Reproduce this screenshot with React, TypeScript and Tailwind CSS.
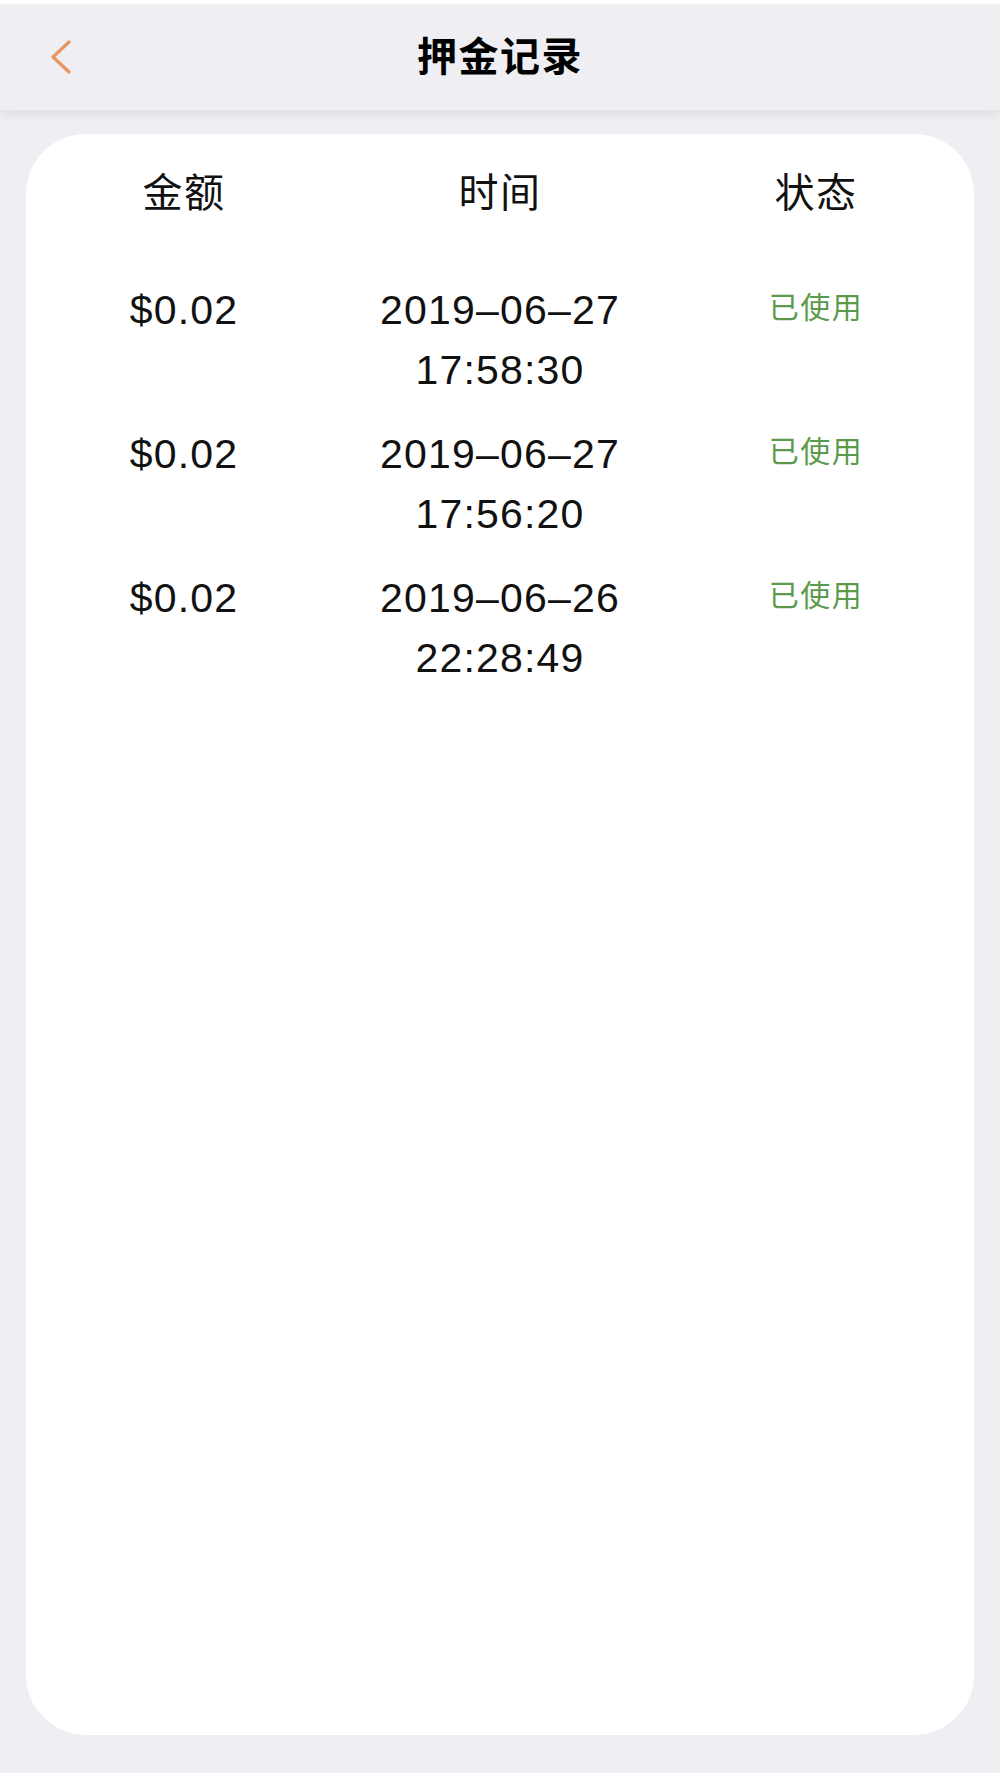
import React from "react";

const rows = [
  { amount: "$0.02", date: "2019–06–27", time: "17:58:30", status: "已使用" },
  { amount: "$0.02", date: "2019–06–27", time: "17:56:20", status: "已使用" },
  { amount: "$0.02", date: "2019–06–26", time: "22:28:49", status: "已使用" },
];

export default function App() {
  return (
    <div
      className="flex h-[1778px] w-full flex-col bg-white"
      style={{ fontFamily: "'Liberation Sans', 'Noto Sans CJK SC', sans-serif" }}
    >
      <div className="h-[4px] bg-white" />
      <header className="relative z-10 grid h-[106px] grid-cols-[1fr_auto_1fr] items-center bg-[#eeeef3] shadow-[0_4px_10px_rgba(0,0,0,0.07)]">
        <div className="flex items-center pl-[50px]">
          <svg width="22" height="34" viewBox="0 0 22 34" fill="none">
            <path
              d="M19 2 L3 17 L19 32"
              stroke="#e9955f"
              strokeWidth="3.2"
              strokeLinecap="round"
              strokeLinejoin="round"
            />
          </svg>
        </div>
        <h1 className="text-[40px] font-bold leading-none tracking-[1.5px] text-black">押金记录</h1>
        <div />
      </header>
      <main className="flex flex-1 flex-col bg-[#eeeef3] px-[26px] pb-[38px] pt-[24px]">
        <div className="flex-1 rounded-[60px] bg-white pt-[29px]">
          <div className="grid grid-cols-3 text-center text-[40px] leading-[60px] tracking-[1.5px] text-[#111]">
            <div>金额</div>
            <div>时间</div>
            <div>状态</div>
          </div>
          <div className="mt-[57px] flex flex-col gap-[24px]">
            {rows.map((r, i) => (
              <div key={i} className="grid grid-cols-3 text-center">
                <div className="text-[41px] leading-[60px] tracking-[1.2px] text-[#111]">{r.amount}</div>
                <div className="flex flex-col text-[41px] leading-[60px] tracking-[1.2px] text-[#111]">
                  <span>{r.date}</span>
                  <span>{r.time}</span>
                </div>
                <div className="text-[30px] leading-[56px] tracking-[1.5px] text-[#5b9a4c]">{r.status}</div>
              </div>
            ))}
          </div>
        </div>
      </main>
      <div className="h-[5px] bg-white" />
    </div>
  );
}
